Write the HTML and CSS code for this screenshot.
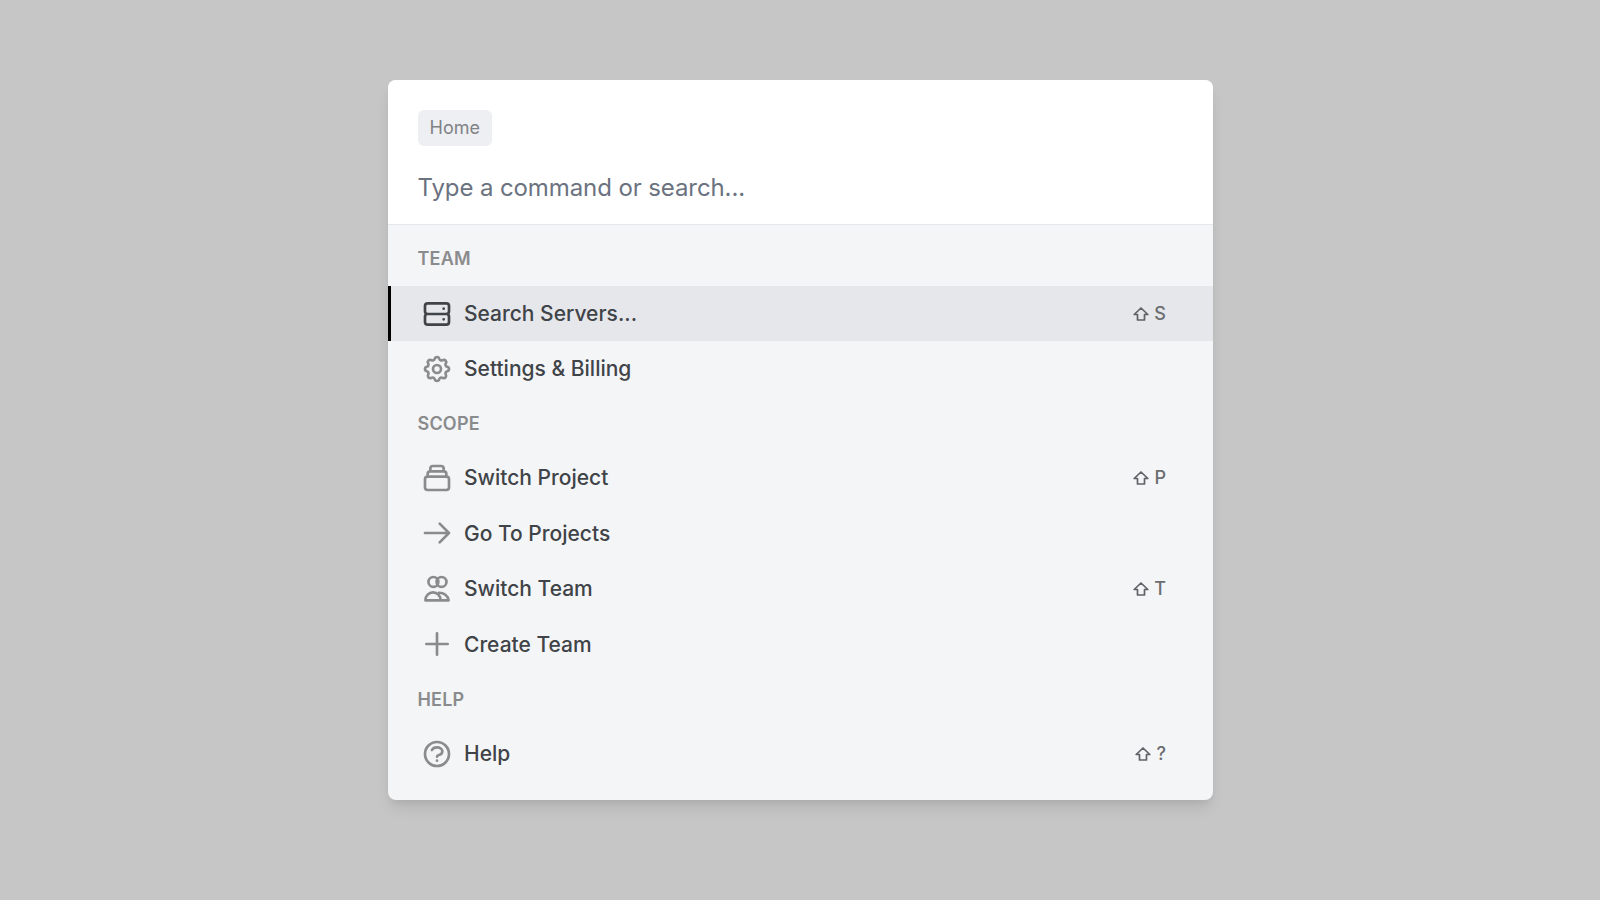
FILE: index.html
```html
<!DOCTYPE html>
<html lang="en">
<head>
<meta charset="utf-8">
<title>Command menu</title>
<link rel="stylesheet" href="styles.css">
</head>
<body>
<main class="card">
  <header class="head">
    <span class="tag">Home</span>
    <div class="input">Type a command or search...</div>
  </header>
  <div class="list">
    <div class="label">TEAM</div>
    <div class="row active">
      <svg class="icon" viewBox="0 0 24 24"><path d="M5 12h14M5 12a2 2 0 01-2-2V6a2 2 0 012-2h14a2 2 0 012 2v4a2 2 0 01-2 2M5 12a2 2 0 00-2 2v4a2 2 0 002 2h14a2 2 0 002-2v-4a2 2 0 00-2-2m-2-4h.01M17 16h.01"/></svg>
      <span class="name">Search Servers...</span>
      <span class="keys"><svg class="shift" viewBox="0 0 16 14"><path d="M8 1 1.200 7.500H4.500V13h7V7.500h3.300z"/></svg>S</span>
    </div>
    <div class="row">
      <svg class="icon" viewBox="0 0 24 24"><path d="M10.325 4.317c.426-1.756 2.924-1.756 3.35 0a1.724 1.724 0 002.573 1.066c1.543-.94 3.31.826 2.37 2.37a1.724 1.724 0 001.065 2.572c1.756.426 1.756 2.924 0 3.35a1.724 1.724 0 00-1.066 2.573c.94 1.543-.826 3.31-2.37 2.37a1.724 1.724 0 00-2.572 1.065c-.426 1.756-2.924 1.756-3.35 0a1.724 1.724 0 00-2.573-1.066c-1.543.94-3.31-.826-2.37-2.37a1.724 1.724 0 00-1.065-2.572c-1.756-.426-1.756-2.924 0-3.35a1.724 1.724 0 001.066-2.573c-.94-1.543.826-3.31 2.37-2.37.996.608 2.296.07 2.572-1.065z"/><path d="M15 12a3 3 0 11-6 0 3 3 0 016 0z"/></svg>
      <span class="name">Settings &amp; Billing</span>
    </div>
    <div class="label">SCOPE</div>
    <div class="row">
      <svg class="icon" viewBox="0 0 24 24"><path d="M19 11H5m14 0a2 2 0 012 2v6a2 2 0 01-2 2H5a2 2 0 01-2-2v-6a2 2 0 012-2m14 0V9a2 2 0 00-2-2M5 11V9a2 2 0 012-2m0 0V5a2 2 0 012-2h6a2 2 0 012 2v2M7 7h10"/></svg>
      <span class="name">Switch Project</span>
      <span class="keys"><svg class="shift" viewBox="0 0 16 14"><path d="M8 1 1.200 7.500H4.500V13h7V7.500h3.300z"/></svg>P</span>
    </div>
    <div class="row">
      <svg class="icon" viewBox="0 0 24 24"><path d="M14 5l7 7m0 0l-7 7m7-7H3"/></svg>
      <span class="name">Go To Projects</span>
    </div>
    <div class="row">
      <svg class="icon" viewBox="0 0 24 24"><circle cx="9.300" cy="6.700" r="3.700"/><circle cx="15.400" cy="6.700" r="3.700"/><path d="M3.300 20.500a5.700 6 0 0111.400 0zM13.500 14.800a7 6.500 0 017.200 5.700h-6"/></svg>
      <span class="name">Switch Team</span>
      <span class="keys"><svg class="shift" viewBox="0 0 16 14"><path d="M8 1 1.200 7.500H4.500V13h7V7.500h3.300z"/></svg>T</span>
    </div>
    <div class="row">
      <svg class="icon" viewBox="0 0 24 24"><path d="M12 4v16m8-8H4"/></svg>
      <span class="name">Create Team</span>
    </div>
    <div class="label">HELP</div>
    <div class="row">
      <svg class="icon" viewBox="0 0 24 24"><path d="M8.228 9c.549-1.165 2.03-2 3.772-2 2.21 0 4 1.343 4 3 0 1.400-1.278 2.575-3.006 2.907-.542.104-.994.540-.994 1.093m0 3h.01M21 12a9 9 0 11-18 0 9 9 0 0118 0z"/></svg>
      <span class="name">Help</span>
      <span class="keys"><svg class="shift" viewBox="0 0 16 14"><path d="M8 1 1.200 7.500H4.500V13h7V7.500h3.300z"/></svg>?</span>
    </div>
  </div>
</main>
</body>
</html>
```
FILE: styles.css
```css
* { box-sizing: border-box; }
html, body { height: 100%; }
body {
  margin: 0;
  padding-top: 80px;
  background: #c6c6c6;
  font-family: Inter, "Liberation Sans", sans-serif;
  display: flex;
  align-items: flex-start;
  justify-content: center;
}
.card {
  width: 825px;
  height: 720px;
  border-radius: 8px;
  overflow: hidden;
  background: #f4f5f7;
  box-shadow: 0 10px 15px -3px rgba(0,0,0,.1), 0 4px 6px -2px rgba(0,0,0,.05);
}
.head {
  background: #fff;
  height: 145px;
  padding: 30px 30px 0;
  border-bottom: 1px solid #e5e7eb;
}
.tag {
  display: inline-block;
  height: 36px;
  line-height: 36px;
  padding: 0 12px;
  border-radius: 6px;
  background: #eeeff2;
  color: #808285;
  font-size: 18px;
}
.input {
  margin-top: 24px;
  font-size: 24px;
  line-height: 36px;
  color: #6b7280;
  letter-spacing: -0.1px;
}
.list { padding-top: 6px; }
.label {
  height: 53.7px;
  padding-left: 30px;
  display: flex;
  align-items: center;
  font-size: 18px;
  font-weight: 600;
  letter-spacing: 0.2px;
  color: #8a8b8d;
}
.label:first-child {
  height: 55px;
}
.row {
  height: 55.5px;
  display: flex;
  align-items: center;
  gap: 11px;
  padding: 0 46.5px 0 33.5px;
  color: #404347;
}
.row.active {
  height: 55px;
  background: #e5e7eb;
  border-left: 3px solid #000;
  padding-left: 30.5px;
}
.icon {
  width: 32px;
  height: 32px;
  flex: none;
  fill: none;
  stroke: #8a8b8d;
  stroke-width: 2;
  stroke-linecap: round;
  stroke-linejoin: round;
}
.active .icon { stroke: #404347; }
.name {
  flex: 1;
  font-size: 21px;
  font-weight: 500;
}
.keys {
  display: flex;
  align-items: center;
  gap: 5.5px;
  font-size: 18px;
  font-weight: 500;
  color: #6b6d70;
}
.shift {
  width: 16px;
  height: 14px;
  fill: none;
  stroke: #5f6266;
  stroke-width: 1.7;
  stroke-linejoin: round;
}
```
